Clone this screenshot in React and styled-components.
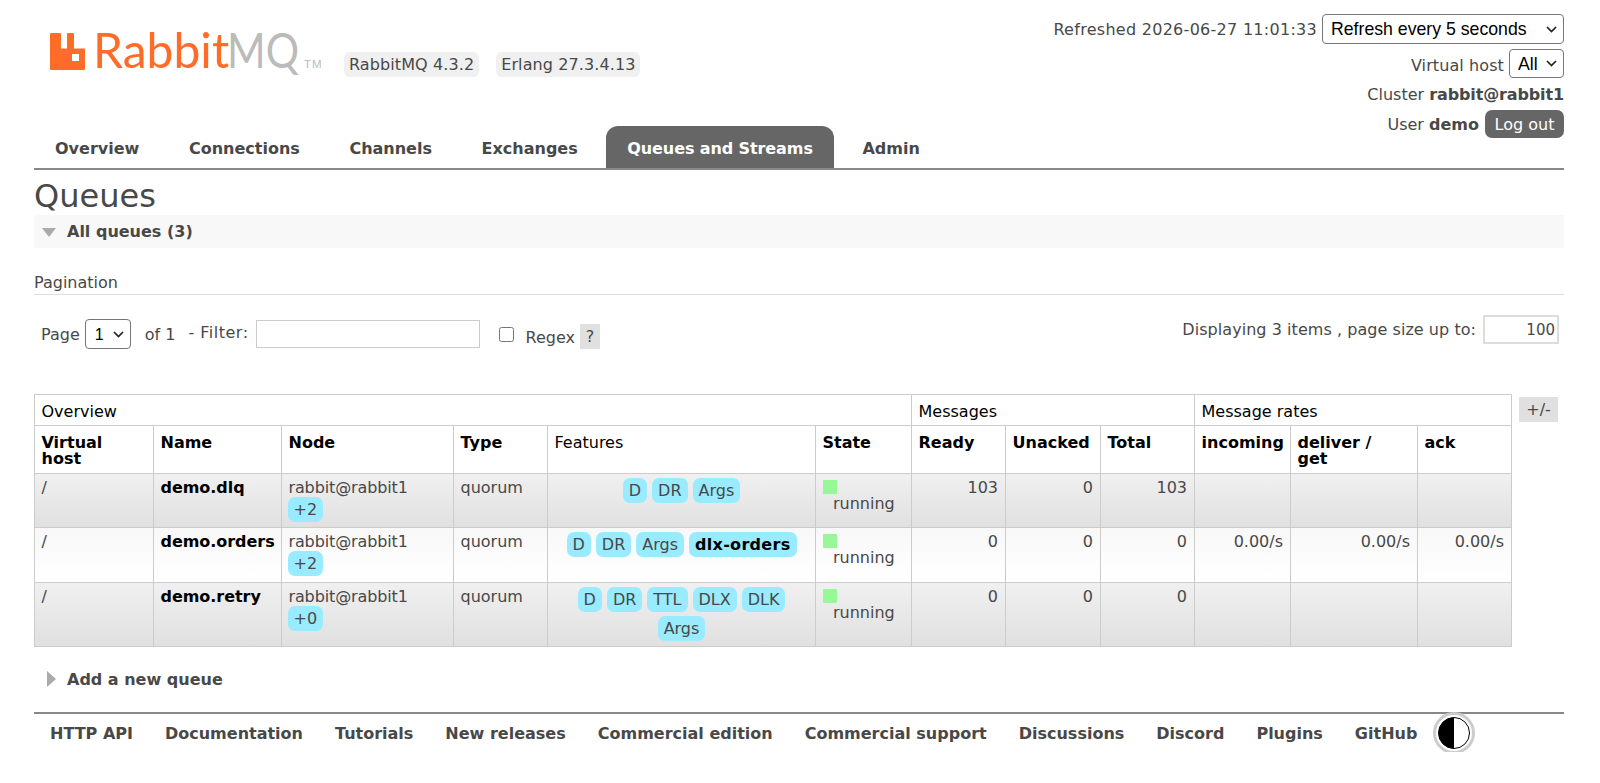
import React from 'react'
import styled, { createGlobalStyle } from 'styled-components'

const GlobalStyle = createGlobalStyle`
  html, body { margin: 0; padding: 0; background: #fff; }
  body { font-family: "DejaVu Sans", Verdana, sans-serif; font-size: 16px; color: #484848; }
`
const chevron = `url("data:image/svg+xml,%3Csvg xmlns='http://www.w3.org/2000/svg' width='11' height='7' viewBox='0 0 11 7'%3E%3Cpath d='M1 1l4.5 4.5L10 1' fill='none' stroke='%23222' stroke-width='1.7'/%3E%3C/svg%3E")`

const Page = styled.div`
  width: 1530px;
  margin-left: 34px;
`
const Header = styled.header`
  display: flex;
  justify-content: space-between;
  height: 126px;
`
const Brand = styled.div`
  display: flex;
  align-items: flex-start;
  padding: 33px 0 0 16px;
`
const LogoMark = styled.svg`
  width: 35px;
  height: 37px;
  flex: none;
`
const LogoText = styled.div`
  display: flex;
  margin: -10px 0 0 8px;
  font-family: Lato, "Liberation Sans", sans-serif;
  font-weight: 400;
  font-size: 49px;
  line-height: 52px;
`
const LogoWord = styled.span`
  width: ${({ w }) => w}px;
  color: ${({ c }) => c};
  transform: scaleX(${({ sx }) => sx});
  transform-origin: left top;
`
const Tm = styled.span`
  margin: 24px 0 0 8px;
  width: 22px;
  color: #bbb;
  font-family: "Liberation Sans", Arial, sans-serif;
  font-size: 11.5px;
  letter-spacing: 1px;
  line-height: 14px;
`
const Versions = styled.div`
  display: flex;
  gap: 17px;
  margin: 19px 0 0 18px;
`
const Version = styled.span`
  background: #f0f0f0;
  border-radius: 6px;
  padding: 0 5px;
  height: 25px;
  line-height: 26px;
  letter-spacing: 0.1px;
`
const Login = styled.div`
  display: flex;
  flex-direction: column;
  align-items: flex-end;
  padding-top: 14px;
`
const LoginRow = styled.div`
  display: flex;
  flex: none;
  align-items: center;
  gap: 5px;
  height: ${({ h }) => h}px;
  margin-top: ${({ mt }) => mt || 0}px;
`
const Refreshed = styled.span`
  letter-spacing: 0.28px;
`
const VhostLabel = styled.span`
  padding-top: 3px;
  letter-spacing: 0.1px;
`
const ClusterName = styled.b`
  letter-spacing: -0.13px;
`
const TopSelect = styled.select`
  appearance: none;
  font-family: "Liberation Sans", Arial, sans-serif;
  font-size: 17.7px;
  color: #000;
  background: #fff ${chevron} no-repeat right 6px center;
  border: 1px solid #767676;
  border-radius: 4px;
  width: ${({ w }) => w}px;
  height: ${({ h }) => h}px;
  padding: 0 0 0 8px;
`
const LogOut = styled.button`
  font: inherit;
  color: #fff;
  background: #666;
  border: 0;
  border-radius: 7px;
  width: 79px;
  height: 28px;
  padding: 0;
  margin-left: 1px;
`
const Tabs = styled.nav`
  display: flex;
  gap: 7.6px;
  height: 42px;
  border-bottom: 2px solid #888;
`
const Tab = styled.a`
  display: block;
  padding: 0 21px;
  line-height: 45px;
  font-weight: 700;
  letter-spacing: ${({ active }) => (active ? '-0.1px' : '0')};
  color: ${({ active }) => (active ? '#fff' : '#484848')};
  background: ${({ active }) => (active ? '#666' : 'transparent')};
  border-radius: 12px 12px 0 0;
`
const Title = styled.h1`
  margin: 7px 0 0;
  font-size: 32px;
  line-height: 38px;
  font-weight: 400;
  color: #484848;
`
const SectionBar = styled.div`
  display: flex;
  align-items: center;
  gap: 11px;
  height: ${({ plain }) => (plain ? 32 : 33)}px;
  background: ${({ plain }) => (plain ? 'transparent' : '#f8f8f8')};
  padding-left: ${({ plain }) => (plain ? 13 : 8)}px;
  line-height: ${({ plain }) => (plain ? 35 : 37)}px;
  font-weight: 700;
`
const ArrowDown = styled.i`
  width: 0;
  height: 0;
  border-left: 7.5px solid transparent;
  border-right: 7.5px solid transparent;
  border-top: 9px solid #aaa;
  margin-top: 1px;
`
const ArrowRight = styled.i`
  width: 0;
  height: 0;
  border-top: 8.5px solid transparent;
  border-bottom: 8.5px solid transparent;
  border-left: 9px solid #aaa;
`
const PaginationHead = styled.h3`
  margin: 24px 0 0;
  font-size: 16px;
  line-height: 22px;
  height: 20px;
  font-weight: 400;
  padding-bottom: 2px;
  border-bottom: 1px solid #ddd;
`
const Filters = styled.div`
  display: flex;
  justify-content: space-between;
  height: 99px;
  padding: 22px 5px 0 7px;
  box-sizing: border-box;
`
const FilterLeft = styled.div`
  display: flex;
  align-items: flex-start;
  height: 32px;
`
const FilterText = styled.span`
  margin-left: ${({ ml }) => ml || 0}px;
  margin-top: ${({ mt }) => mt || 0}px;
  letter-spacing: ${({ ls }) => ls || 0}px;
  line-height: 20px;
`
const PageSelect = styled(TopSelect)`
  margin: 2px 0 0 5px;
  font-size: 16px;
  padding-left: 9px;
`
const FilterInput = styled.input`
  width: 224px;
  height: 28px;
  margin: 3px 0 0 7px;
  padding: 0 4px;
  box-sizing: border-box;
  border: 1px solid #ccc;
`
const RegexBox = styled.input`
  width: 15px;
  height: 15px;
  margin: 10px 0 0 19px;
`
const Help = styled.span`
  width: 20px;
  height: 25px;
  margin: 7px 0 0 5px;
  background: #e0e0e0;
  text-align: center;
  line-height: 25px;
`
const Displaying = styled.div`
  display: flex;
  align-items: flex-start;
  gap: 7px;
  line-height: 26px;
  letter-spacing: 0.05px;
`
const PageSize = styled.input`
  width: 76px;
  height: 29px;
  margin-top: -2px;
  padding: 0 2px;
  box-sizing: border-box;
  border: 2px solid #ddd;
  font-family: inherit;
  font-size: 15px;
  color: #484848;
  text-align: right;
`
const TableRow = styled.div`
  display: flex;
  align-items: flex-start;
  gap: 7px;
`
const Table = styled.table`
  width: 1477px;
  table-layout: fixed;
  border-collapse: collapse;
  border: 1px solid #ccc;
`
const GroupCell = styled.th`
  height: 31px;
  padding: 2px 7px 0 6.5px;
  box-sizing: border-box;
  border: 1px solid #ccc;
  font-weight: 400;
  text-align: left;
  color: #000;
`
const HeadCell = styled.th`
  height: 48px;
  padding: 9px 7px 0 6.5px;
  box-sizing: border-box;
  vertical-align: top;
  border: 1px solid #ccc;
  text-align: left;
  line-height: 16px;
  color: #000;
  white-space: pre-line;
  font-weight: ${({ plain }) => (plain ? 400 : 700)};
`
const Row = styled.tr`
  background: ${({ alt }) =>
    alt
      ? 'linear-gradient(to bottom, #f8f8f8 0%, #ffffff 100%)'
      : 'linear-gradient(to bottom, #f0f0f0 0%, #e0e0e0 100%)'};
`
const Cell = styled.td`
  height: ${({ h }) => h}px;
  padding: 5px 7px 0 6.5px;
  box-sizing: border-box;
  vertical-align: top;
  border: 1px solid #ccc;
  line-height: 18px;
  text-align: ${({ align }) => align || 'left'};
`
const Name = styled.b`
  color: #000;
  letter-spacing: -0.05px;
`
const Tag = styled.span`
  display: inline-block;
  background: #99ebff;
  border-radius: 7px;
  height: 25px;
  line-height: 25px;
  padding: 0 6px;
  font-weight: ${({ bold }) => (bold ? 700 : 400)};
  letter-spacing: ${({ bold }) => (bold ? 0.3 : 0)}px;
  color: ${({ bold }) => (bold ? '#000' : '#484848')};
`
const NodeName = styled.div`
  height: 18px;
  letter-spacing: -0.13px;
`
const NodeTag = styled(Tag)`
  margin-left: -1px;
`
const FeatureCell = styled(Cell)`
  padding: 3.5px 10px 0;
`
const Features = styled.div`
  display: flex;
  flex-wrap: wrap;
  justify-content: center;
  gap: 4px 5px;
`
const StateCell = styled(Cell)`
  padding-top: 6px;
`
const StatusDot = styled.i`
  display: block;
  width: 14px;
  height: 14px;
  background: #98f898;
`
const StatusText = styled.div`
  margin: 1px 0 0 10.5px;
`
const PlusMinus = styled.span`
  width: 39px;
  height: 25px;
  margin-top: 3px;
  background: #e0e0e0;
  text-align: center;
  line-height: 25px;
`
const AddSection = styled.div`
  margin-top: 16px;
`
const Footer = styled.footer`
  display: flex;
  align-items: center;
  gap: 32px;
  height: 38px;
  margin-top: 17px;
  padding-left: 16px;
  border-top: 2px solid #888;
`
const FooterLink = styled.a`
  font-weight: 700;
  color: #484848;
`
const ThemeToggle = styled.svg`
  width: 42px;
  height: 42px;
  flex: none;
  margin-left: -16px;
`

const tabs = ['Overview', 'Connections', 'Channels', 'Exchanges', 'Queues and Streams', 'Admin']
const links = ['HTTP API', 'Documentation', 'Tutorials', 'New releases', 'Commercial edition', 'Commercial support', 'Discussions', 'Discord', 'Plugins', 'GitHub']
const widths = [119, 128, 172, 94, 268, 96, 94, 95, 94, 96, 127, 94]
const heads = ['Virtual\nhost', 'Name', 'Node', 'Type', 'Features', 'State', 'Ready', 'Unacked', 'Total', 'incoming', 'deliver /\nget', 'ack']
const queues = [
  { name: 'demo.dlq', extra: '+2', h: 54, features: ['D', 'DR', 'Args'], nums: ['103', '0', '103'], rates: ['', '', ''] },
  { name: 'demo.orders', extra: '+2', h: 55, alt: true, features: ['D', 'DR', 'Args'], bold: 'dlx-orders', nums: ['0', '0', '0'], rates: ['0.00/s', '0.00/s', '0.00/s'] },
  { name: 'demo.retry', extra: '+0', h: 64, features: ['D', 'DR', 'TTL', 'DLX', 'DLK', 'Args'], nums: ['0', '0', '0'], rates: ['', '', ''] },
]

function App() {
  return (
    <Page>
      <GlobalStyle />
      <Header>
        <Brand>
          <LogoMark viewBox="0 0 35 37">
            <path
              fill="#ff6c28"
              fillRule="evenodd"
              d="M1 0h9a1 1 0 0 1 1 1v14.500h6V1a1 1 0 0 1 1-1h5a1 1 0 0 1 1 1v14.500h10a1 1 0 0 1 1 1V36a1 1 0 0 1-1 1H1a1 1 0 0 1-1-1V1a1 1 0 0 1 1-1zM22 21v7h7v-7z"
            />
          </LogoMark>
          <LogoText>
            <LogoWord w={134} sx={0.98} c="#ff6c28">Rabbit</LogoWord>
            <LogoWord w={69} sx={0.85} c="#bbb">MQ</LogoWord>
          </LogoText>
          <Tm>TM</Tm>
          <Versions>
            <Version>RabbitMQ 4.3.2</Version>
            <Version>Erlang 27.3.4.13</Version>
          </Versions>
        </Brand>
        <Login>
          <LoginRow h={30}>
            <Refreshed>Refreshed 2026-06-27 11:01:33</Refreshed>
            <TopSelect w={242} h={30} defaultValue="5">
              <option value="5">Refresh every 5 seconds</option>
            </TopSelect>
          </LoginRow>
          <LoginRow h={29} mt={5}>
            <VhostLabel>Virtual host</VhostLabel>
            <TopSelect w={55} h={29} defaultValue="all">
              <option value="all">All</option>
            </TopSelect>
          </LoginRow>
          <LoginRow h={32}>
            <span>Cluster <ClusterName>rabbit@rabbit1</ClusterName></span>
          </LoginRow>
          <LoginRow h={28}>
            <span>User <b>demo</b></span>
            <LogOut>Log out</LogOut>
          </LoginRow>
        </Login>
      </Header>
      <Tabs>
        {tabs.map((t) => (
          <Tab key={t} active={t === 'Queues and Streams'}>{t}</Tab>
        ))}
      </Tabs>
      <Title>Queues</Title>
      <SectionBar>
        <ArrowDown />
        All queues (3)
      </SectionBar>
      <PaginationHead>Pagination</PaginationHead>
      <Filters>
        <FilterLeft>
          <FilterText mt={8}>Page</FilterText>
          <PageSelect w={46} h={30} defaultValue="1">
            <option value="1">1</option>
          </PageSelect>
          <FilterText ml={14} mt={8}>of 1</FilterText>
          <FilterText ml={13} mt={6} ls={0.5}>- Filter:</FilterText>
          <FilterInput />
          <RegexBox type="checkbox" />
          <FilterText ml={12} mt={11}>Regex</FilterText>
          <Help>?</Help>
        </FilterLeft>
        <Displaying>
          Displaying 3 items , page size up to:
          <PageSize defaultValue="100" />
        </Displaying>
      </Filters>
      <TableRow>
        <Table>
          <colgroup>
            {widths.map((w, i) => (
              <col key={i} width={w} />
            ))}
          </colgroup>
          <thead>
            <tr>
              <GroupCell colSpan={6}>Overview</GroupCell>
              <GroupCell colSpan={3}>Messages</GroupCell>
              <GroupCell colSpan={3}>Message rates</GroupCell>
            </tr>
            <tr>
              {heads.map((h) => (
                <HeadCell key={h} plain={h === 'Features'}>{h}</HeadCell>
              ))}
            </tr>
          </thead>
          <tbody>
            {queues.map((q) => (
              <Row key={q.name} alt={q.alt}>
                <Cell h={q.h}>/</Cell>
                <Cell h={q.h}><Name>{q.name}</Name></Cell>
                <Cell h={q.h}>
                  <NodeName>rabbit@rabbit1</NodeName>
                  <NodeTag>{q.extra}</NodeTag>
                </Cell>
                <Cell h={q.h}>quorum</Cell>
                <FeatureCell h={q.h}>
                  <Features>
                    {q.features.map((f) => (
                      <Tag key={f}>{f}</Tag>
                    ))}
                    {q.bold && <Tag bold>{q.bold}</Tag>}
                  </Features>
                </FeatureCell>
                <StateCell h={q.h}>
                  <StatusDot />
                  <StatusText>running</StatusText>
                </StateCell>
                {q.nums.map((n, i) => (
                  <Cell key={i} h={q.h} align="right">{n}</Cell>
                ))}
                {q.rates.map((r, i) => (
                  <Cell key={i} h={q.h} align="right">{r}</Cell>
                ))}
              </Row>
            ))}
          </tbody>
        </Table>
        <PlusMinus>+/-</PlusMinus>
      </TableRow>
      <AddSection>
        <SectionBar plain>
          <ArrowRight />
          Add a new queue
        </SectionBar>
      </AddSection>
      <Footer>
        {links.map((l) => (
          <FooterLink key={l}>{l}</FooterLink>
        ))}
        <ThemeToggle viewBox="0 0 42 42">
          <circle cx="21" cy="21" r="19.5" fill="#fff" stroke="#ccc" strokeWidth="3" />
          <circle cx="21" cy="21" r="15.5" fill="#fff" stroke="#000" strokeWidth="1" />
          <path d="M21 5.500a15.500 15.500 0 0 0 0 31z" fill="#000" />
        </ThemeToggle>
      </Footer>
    </Page>
  )
}

export default App
